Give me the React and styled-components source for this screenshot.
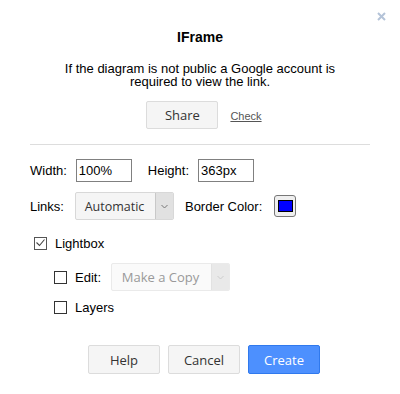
import React from 'react';
import styled, { createGlobalStyle } from 'styled-components';

const Global = createGlobalStyle`
  html, body { margin: 0; padding: 0; background: #fff; }
  body { font-family: "Liberation Sans", Arial, sans-serif; }
`;

const Dialog = styled.div`
  position: relative;
  width: 400px;
  height: 394px;
  box-sizing: border-box;
  padding: 27px 30px 0;
  background: #fff;
  font-family: "Liberation Sans", Arial, sans-serif;
  font-size: 13px;
  color: #000;
`;

const Close = styled.button`
  position: absolute;
  top: 12px;
  left: 377px;
  width: 9px;
  height: 9px;
  padding: 0;
  border: 0;
  background: none;
  cursor: pointer;
  svg { display: block; }
`;

const Title = styled.h2`
  margin: 0;
  font-size: 14px;
  font-weight: bold;
  line-height: 20px;
  text-align: center;
`;

const Note = styled.p`
  margin: 15px auto 0;
  max-width: 300px;
  line-height: 13px;
  text-align: center;
`;

const CenterRow = styled.div`
  display: flex;
  justify-content: center;
  align-items: center;
  gap: ${p => p.$gap}px;
  margin-top: ${p => p.$mt}px;
  padding-left: 8px;
`;

const Button = styled.button`
  box-sizing: border-box;
  width: 72px;
  height: ${p => p.$h || 28}px;
  padding: 0;
  border: 1px solid ${p => (p.$primary ? '#3079ed' : '#dcdcdc')};
  border-radius: 2px;
  background: ${p => (p.$primary ? '#4d90fe' : '#f5f5f5')};
  color: ${p => (p.$primary ? '#fff' : '#333')};
  font-family: "Open Sans", "Noto Sans", sans-serif;
  font-size: 13px;
  cursor: pointer;
`;

const Link = styled.a`
  font-size: 11px;
  color: #555;
  text-decoration: underline;
  margin-top: 2px;
`;

const Divider = styled.hr`
  margin: 15px 0 0;
  border: 0;
  height: 1px;
  background: #ddd;
`;

const Row = styled.div`
  display: flex;
  align-items: center;
  height: ${p => p.$h}px;
  margin-top: ${p => p.$mt}px;
  padding-left: ${p => p.$indent || 0}px;
`;

const Label = styled.span`
  margin-left: ${p => p.$ml || 0}px;
  margin-right: ${p => p.$mr || 0}px;
  white-space: nowrap;
`;

const TextInput = styled.input`
  box-sizing: border-box;
  width: 56px;
  height: 23px;
  margin: 0;
  padding: 0 2px;
  border: 1px solid #808080;
  border-radius: 0;
  font-family: "Liberation Sans", Arial, sans-serif;
  font-size: 13px;
  color: #000;
  outline: none;
`;

const Select = styled.div`
  box-sizing: border-box;
  display: flex;
  width: ${p => p.$w}px;
  height: 28px;
  border: 1px solid ${p => (p.$disabled ? '#eaeaea' : '#d8d8d8')};
  border-radius: 2px;
  background: ${p => (p.$disabled ? '#fafafa' : '#f5f5f5')};
  font-family: "Open Sans", "Noto Sans", sans-serif;
  font-size: ${p => p.$fs || 13}px;
  color: ${p => (p.$disabled ? '#999' : '#333')};
  overflow: hidden;
`;

const SelectValue = styled.span`
  flex: 1;
  display: flex;
  align-items: center;
  justify-content: center;
  padding-right: 2px;
`;

const SelectArrow = styled.span`
  width: 17px;
  display: flex;
  align-items: center;
  justify-content: center;
  border-left: 1px solid ${p => (p.$disabled ? '#e2e2e2' : '#c8c8c8')};
  background: ${p => (p.$disabled ? '#e9e9e9' : '#e1e1e1')};
  svg { display: block; }
`;

const ColorButton = styled.button`
  box-sizing: border-box;
  width: 22px;
  height: 22px;
  margin-left: 12px;
  padding: 0;
  border: 1px solid #777;
  border-radius: 3px;
  background: #efefef;
  display: flex;
  align-items: center;
  justify-content: center;
`;

const Swatch = styled.span`
  display: block;
  width: 15px;
  height: 12px;
  box-sizing: border-box;
  border: 1px solid #000;
  background: ${p => p.$color};
`;

const Box = styled.span`
  box-sizing: border-box;
  width: 13px;
  height: 13px;
  border: 1px solid ${p => (p.$checked ? '#555' : '#333')};
  background: #fff;
  margin-right: 8px;
  display: flex;
  align-items: center;
  justify-content: center;
  svg { display: block; }
`;

const Chevron = ({ color }) => (
  <svg width="7" height="5" viewBox="0 0 7 5">
    <polyline points="0.5,1 3.5,4 6.5,1" fill="none" stroke={color} strokeWidth="1" />
  </svg>
);

const Checkbox = ({ checked }) => (
  <Box $checked={checked}>
    {checked && (
      <svg width="9" height="8" viewBox="0 0 9 8">
        <polyline points="0.5,3.5 3.5,6.5 8.5,0.5" fill="none" stroke="#444" strokeWidth="1.1" />
      </svg>
    )}
  </Box>
);

export default function App() {
  return (
    <>
      <Global />
      <Dialog>
        <Close aria-label="Close">
          <svg width="9" height="9" viewBox="0 0 9 9">
            <path d="M1 1 L8 8 M8 1 L1 8" stroke="#b4c3d8" strokeWidth="2" />
          </svg>
        </Close>
        <Title>IFrame</Title>
        <Note>If the diagram is not public a Google account is required to view the link.</Note>
        <CenterRow $mt={13} $gap={12}>
          <Button>Share</Button>
          <Link>Check</Link>
        </CenterRow>
        <Divider />
        <Row $h={23} $mt={14}>
          <Label $mr={9}>Width:</Label>
          <TextInput defaultValue="100%" />
          <Label $ml={16} $mr={9}>Height:</Label>
          <TextInput defaultValue="363px" />
        </Row>
        <Row $h={28} $mt={10}>
          <Label $mr={11}>Links:</Label>
          <Select $w={99} $fs={12.5}>
            <SelectValue>Automatic</SelectValue>
            <SelectArrow><Chevron color="#777" /></SelectArrow>
          </Select>
          <Label $ml={11}>Border Color:</Label>
          <ColorButton aria-label="Border color"><Swatch $color="#0000ff" /></ColorButton>
        </Row>
        <Row $h={20} $mt={13} $indent={4}>
          <Checkbox checked />
          <Label>Lightbox</Label>
        </Row>
        <Row $h={28} $mt={10} $indent={24}>
          <Checkbox />
          <Label $mr={10}>Edit:</Label>
          <Select $w={119} $disabled>
            <SelectValue>Make a Copy</SelectValue>
            <SelectArrow $disabled><Chevron color="#ccc" /></SelectArrow>
          </Select>
        </Row>
        <Row $h={20} $mt={6} $indent={24}>
          <Checkbox />
          <Label>Layers</Label>
        </Row>
        <CenterRow $mt={28} $gap={8}>
          <Button $h={29}>Help</Button>
          <Button $h={29}>Cancel</Button>
          <Button $h={29} $primary>Create</Button>
        </CenterRow>
      </Dialog>
    </>
  );
}
